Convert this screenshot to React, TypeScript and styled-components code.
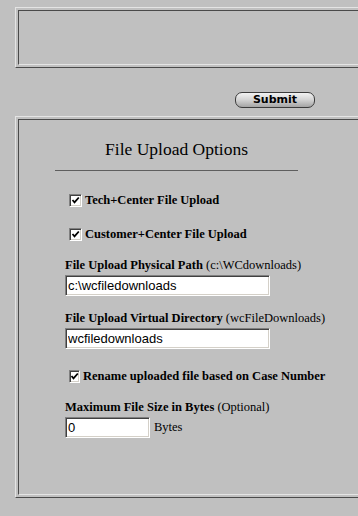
import styled, { createGlobalStyle } from "styled-components";

const GlobalStyle = createGlobalStyle`
  html, body {
    margin: 0;
    padding: 0;
    background: #c0c0c0;
    overflow: hidden;
  }
  body {
    font-family: "Liberation Serif", "Times New Roman", serif;
    color: #000;
  }
`;

const Page = styled.div`
  width: 358px;
  height: 516px;
  padding-top: 7px;
  box-sizing: border-box;
  overflow: hidden;
`;

const Frame = styled.div<{ $height: number }>`
  margin-left: 15px;
  margin-right: -30px;
  border-top: 1px solid #e4e4e4;
  border-left: 1px solid #e4e4e4;
  border-bottom: 1px solid #4a4a4a;
  padding: 2px 0 2px 2px;
`;

const FrameInner = styled.div<{ $height: number }>`
  height: ${(p) => p.$height}px;
  border-top: 1px solid #4a4a4a;
  border-left: 1px solid #4a4a4a;
  border-bottom: 1px solid #e4e4e4;
`;

const ButtonRow = styled.div`
  display: flex;
  justify-content: flex-end;
  padding: 24px 43px 8px 0;
`;

const SubmitButton = styled.button`
  width: 80px;
  height: 16px;
  padding: 0;
  border: 1px solid #3c3c3c;
  border-radius: 7px;
  background: linear-gradient(#f2f2f2, #d6d6d6 45%, #a4a4a4);
  font-family: "DejaVu Sans", Verdana, sans-serif;
  font-weight: bold;
  font-size: 11px;
  line-height: 14px;
  color: #000;
`;

const Options = styled.div`
  width: 243px;
  margin-left: 36px;
  padding-top: 19px;
`;

const Title = styled.div`
  font-size: 17.5px;
  line-height: 21px;
  text-align: center;
`;

const Rule = styled.div`
  height: 1px;
  background: #5e5e5e;
  margin-top: 10px;
`;

const Fields = styled.div`
  margin-left: 10px;
  display: flex;
  flex-direction: column;
`;

const CheckRow = styled.label<{ $top: number }>`
  display: flex;
  align-items: center;
  gap: 3px;
  margin-top: ${(p) => p.$top}px;
  margin-left: 4px;
  font-size: 12.5px;
  font-weight: bold;
  line-height: 15px;
  white-space: nowrap;
`;

const Box = styled.span`
  width: 13px;
  height: 13px;
  box-sizing: border-box;
  background: #fff;
  border: 1px solid;
  border-color: #808080 #ffffff #ffffff #808080;
  box-shadow: inset 1px 1px #404040, inset -1px -1px #d4d0c8;
  display: flex;
  align-items: center;
  justify-content: center;
`;

const FieldLabel = styled.div<{ $top: number }>`
  margin-top: ${(p) => p.$top}px;
  font-size: 12.5px;
  line-height: 15px;
  white-space: nowrap;
  b {
    font-weight: bold;
  }
`;

const InputRow = styled.div`
  display: flex;
  align-items: center;
  gap: 4px;
  margin-top: 2px;
  font-size: 12.5px;
`;

const TextBox = styled.input<{ $width: number }>`
  width: ${(p) => p.$width}px;
  height: 21px;
  box-sizing: border-box;
  padding: 0 2px;
  border: 1px solid;
  border-color: #808080 #ffffff #ffffff #808080;
  box-shadow: inset 1px 1px #404040, inset -1px -1px #d4d0c8;
  background: #fff;
  font-family: "Liberation Sans", Arial, sans-serif;
  font-size: 13px;
  color: #000;
  outline: none;
`;

function Check() {
  return (
    <Box>
      <svg width="9" height="9" viewBox="0 0 9 9">
        <polyline
          points="1.5,4 3.5,6.3 7.8,1.5"
          fill="none"
          stroke="#000"
          strokeWidth="1.8"
        />
      </svg>
    </Box>
  );
}

export default function App() {
  return (
    <Page>
      <GlobalStyle />
      <Frame $height={53}>
        <FrameInner $height={53} />
      </Frame>
      <ButtonRow>
        <SubmitButton type="button">Submit</SubmitButton>
      </ButtonRow>
      <Frame $height={374}>
        <FrameInner $height={374}>
          <Options>
            <Title>File Upload Options</Title>
            <Rule />
            <Fields>
              <CheckRow $top={22}>
                <Check />
                Tech+Center File Upload
              </CheckRow>
              <CheckRow $top={19}>
                <Check />
                Customer+Center File Upload
              </CheckRow>
              <FieldLabel $top={16}>
                <b>File Upload Physical Path</b> (c:\WCdownloads)
              </FieldLabel>
              <InputRow>
                <TextBox $width={205} defaultValue="c:\wcfiledownloads" />
              </InputRow>
              <FieldLabel $top={15}>
                <b>File Upload Virtual Directory</b> (wcFileDownloads)
              </FieldLabel>
              <InputRow>
                <TextBox $width={205} defaultValue="wcfiledownloads" />
              </InputRow>
              <CheckRow $top={20}>
                <Check />
                Rename uploaded file based on Case Number
              </CheckRow>
              <FieldLabel $top={16}>
                <b>Maximum File Size in Bytes</b> (Optional)
              </FieldLabel>
              <InputRow>
                <TextBox $width={85} defaultValue="0" />
                Bytes
              </InputRow>
            </Fields>
          </Options>
        </FrameInner>
      </Frame>
    </Page>
  );
}
